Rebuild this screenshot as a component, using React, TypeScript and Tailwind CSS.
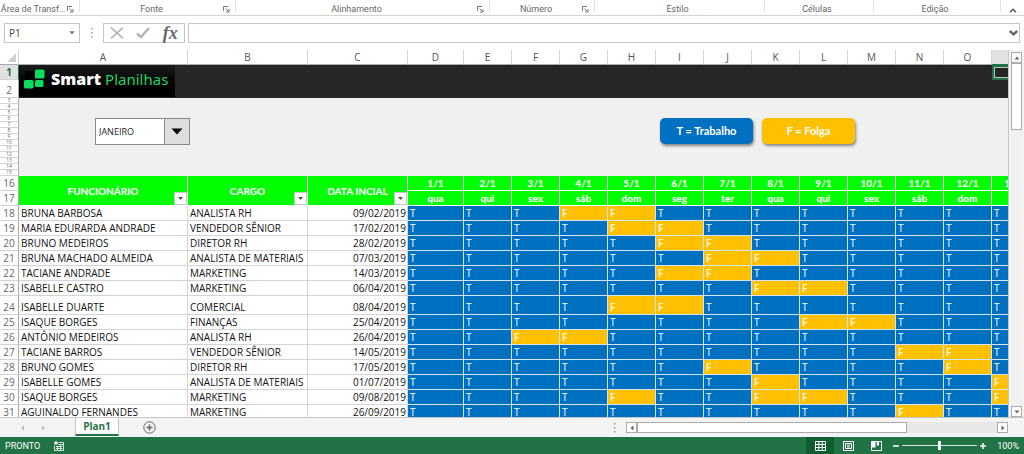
import { useState } from 'react';
import type { ReactNode } from 'react';
import clsx from 'clsx';

const ribbonGroups = [
  { label: 'Área de Transf...', launcher: true },
  { label: 'Fonte', launcher: true },
  { label: 'Alinhamento', launcher: true },
  { label: 'Número', launcher: true },
  { label: 'Estilo', launcher: false },
  { label: 'Células', launcher: false },
  { label: 'Edição', launcher: false },
];

const columns = ['A', 'B', 'C', 'D', 'E', 'F', 'G', 'H', 'I', 'J', 'K', 'L', 'M', 'N', 'O', 'P'];
const weekdays = ['qua', 'qui', 'sex', 'sáb', 'dom', 'seg', 'ter'];
const days = Array.from({ length: 13 }, (_, i) => ({ date: `${i + 1}/1`, weekday: weekdays[i % 7] }));
const spacerRows = Array.from({ length: 13 }, (_, i) => i + 3);

const months = [
  'JANEIRO', 'FEVEREIRO', 'MARÇO', 'ABRIL', 'MAIO', 'JUNHO',
  'JULHO', 'AGOSTO', 'SETEMBRO', 'OUTUBRO', 'NOVEMBRO', 'DEZEMBRO',
];

// off: indexes of the days off, counted from 1/1
const employees = [
  { row: 18, name: 'BRUNA BARBOSA', role: 'ANALISTA RH', start: '09/02/2019', off: [3, 4] },
  { row: 19, name: 'MARIA EDURARDA ANDRADE', role: 'VENDEDOR SÊNIOR', start: '17/02/2019', off: [4, 5] },
  { row: 20, name: 'BRUNO MEDEIROS', role: 'DIRETOR RH', start: '28/02/2019', off: [5, 6] },
  { row: 21, name: 'BRUNA MACHADO ALMEIDA', role: 'ANALISTA DE MATERIAIS', start: '07/03/2019', off: [6, 7] },
  { row: 22, name: 'TACIANE ANDRADE', role: 'MARKETING', start: '14/03/2019', off: [5, 6] },
  { row: 23, name: 'ISABELLE CASTRO', role: 'MARKETING', start: '06/04/2019', off: [7, 8] },
  { row: 24, name: 'ISABELLE DUARTE', role: 'COMERCIAL', start: '08/04/2019', off: [4, 5], tall: true },
  { row: 25, name: 'ISAQUE BORGES', role: 'FINANÇAS', start: '25/04/2019', off: [8, 9] },
  { row: 26, name: 'ANTÔNIO MEDEIROS', role: 'ANALISTA RH', start: '26/04/2019', off: [2, 3] },
  { row: 27, name: 'TACIANE BARROS', role: 'VENDEDOR SÊNIOR', start: '14/05/2019', off: [10, 11] },
  { row: 28, name: 'BRUNO GOMES', role: 'DIRETOR RH', start: '17/05/2019', off: [6, 11] },
  { row: 29, name: 'ISABELLE GOMES', role: 'ANALISTA DE MATERIAIS', start: '01/07/2019', off: [7, 12] },
  { row: 30, name: 'ISAQUE BORGES', role: 'MARKETING', start: '09/08/2019', off: [4, 7, 8, 12] },
  { row: 31, name: 'AGUINALDO FERNANDES', role: 'MARKETING', start: '26/09/2019', off: [10] },
];

const LauncherIcon = () => (
  <svg width="7" height="7" viewBox="0 0 7 7" fill="none" stroke="#777">
    <path d="M0.5 5V0.5H5M2.5 2.5L5.5 5.5M6 3V6H3" />
  </svg>
);

const Ribbon = () => (
  <div className="grid h-4 shrink-0 grid-cols-[80fr_156fr_254fr_105fr_170fr_109fr_127fr_23fr] border-b border-[#d4d4d4] font-[Roboto,sans-serif] text-[9px] leading-[18px] text-[#666]">
    {ribbonGroups.map((group) => (
      <div key={group.label} className="mb-1 flex h-3 border-r border-[#e1e1e1] pr-1">
        <span className="flex-1 whitespace-nowrap text-center">{group.label}</span>
        {group.launcher && (
          <button aria-label={`Opções de ${group.label}`} className="w-2 pt-1.5">
            <LauncherIcon />
          </button>
        )}
      </div>
    ))}
    <button aria-label="Recolher a faixa de opções" className="flex items-center justify-center pt-1">
      <svg width="8" height="5" viewBox="0 0 8 5" fill="none" stroke="#555" strokeWidth="1.5">
        <path d="M1 4.2L4 1.2L7 4.2" />
      </svg>
    </button>
  </div>
);

const DotGrip = () => (
  <svg width="2" height="10" viewBox="0 0 2 10" fill="#999">
    <path d="M0 0h1.5v1.5H0zM0 4h1.5v1.5H0zM0 8h1.5v1.5H0z" />
  </svg>
);

const FormulaBar = () => (
  <div className="flex h-[34px] shrink-0 items-center px-1">
    <div className="flex h-5 w-19 items-center border border-[#c6c6c6] bg-white">
      <input aria-label="Caixa de nome" defaultValue="P1" className="w-full min-w-0 pl-1 text-[10px] text-[#444] outline-none" />
      <button aria-label="Abrir lista de nomes" className="px-1">
        <svg width="6" height="4" viewBox="0 0 6 4" fill="#777"><path d="M0.3 0.3H5.7L3 3.5Z" /></svg>
      </button>
    </div>
    <div className="flex w-[23px] justify-center"><DotGrip /></div>
    <div className="flex h-5 w-[82px] items-center justify-around border border-[#c6c6c6] bg-white">
      <button aria-label="Cancelar">
        <svg width="14" height="12" viewBox="0 0 14 12" stroke="#b4b4b4" strokeWidth="1.7"><path d="M1 0.7L13 11.3M13 0.7L1 11.3" /></svg>
      </button>
      <button aria-label="Inserir">
        <svg width="14" height="12" viewBox="0 0 14 12" fill="none" stroke="#b4b4b4" strokeWidth="2.4"><path d="M1 6.5L5 10L13 1" /></svg>
      </button>
      <button aria-label="Inserir função" className="font-['Liberation_Serif',serif] text-lg leading-4 font-bold text-[#666] italic">
        fx
      </button>
    </div>
    <div className="ml-[3px] flex h-5 flex-1 items-center border border-[#c6c6c6] bg-white">
      <input aria-label="Barra de fórmulas" className="min-w-0 flex-1 px-1 text-[10px] outline-none" />
      <button aria-label="Expandir barra de fórmulas" className="px-px">
        <svg width="9" height="6" viewBox="0 0 9 6" fill="none" stroke="#666" strokeWidth="2.4"><path d="M0.8 1L4.5 4.4L8.2 1" /></svg>
      </button>
    </div>
  </div>
);

const Logo = () => (
  <div className="flex h-8 w-39 items-center bg-gradient-to-b from-[#1c1c1c] to-black pb-1 pl-[5px]">
    <svg width="21" height="20" viewBox="0 0 21 20">
      <rect x="1" y="2" width="9" height="8" rx="1" fill="#000" />
      <rect x="11" y="0.5" width="9.500" height="9" rx="1.500" fill="#0bdc62" />
      <rect x="0" y="11" width="9.500" height="8.500" rx="1.500" fill="#0bdc62" />
      <rect x="11" y="11" width="8.500" height="7" rx="1.500" fill="#0bdc62" />
    </svg>
    <span className="ml-1.5 font-['Open_Sans',sans-serif] text-base leading-5 font-extrabold text-white">Smart</span>
    <span className="ml-1 font-['Noto_Sans',sans-serif] text-[15px] leading-5 text-[#1fd366]">Planilhas</span>
  </div>
);

const MonthPicker = () => {
  const [month, setMonth] = useState('JANEIRO');

  return (
    <div className="relative h-[27px] w-[95px]">
      <select
        aria-label="Mês"
        value={month}
        onChange={(e) => setMonth(e.target.value)}
        className="h-full w-full appearance-none border border-[#8a8a8a] bg-white pl-[3px] font-['Open_Sans',sans-serif] text-[9px] text-[#222]"
      >
        {months.map((m) => (
          <option key={m}>{m}</option>
        ))}
      </select>
      <span className="pointer-events-none absolute inset-y-px right-px flex w-[25px] items-center justify-center border-l border-[#8a8a8a] bg-[#dedede]">
        <svg width="12" height="7" viewBox="0 0 12 7"><path d="M0.5 0.5H11.5L6 6.5Z" /></svg>
      </span>
    </div>
  );
};

const Legend = ({ className, children }: { className: string; children: ReactNode }) => (
  <div className={clsx('flex h-[26px] w-[93px] items-center justify-center rounded-[5px] text-[11px] font-bold text-white shadow-[1px_2px_3px_rgba(0,0,0,0.45)]', className)}>
    {children}
  </div>
);

const RowHeader = ({ children, active }: { children: ReactNode; active?: boolean }) => (
  <th
    scope="row"
    className={clsx(
      'border-r border-b p-0 text-center align-bottom text-[10px] leading-[14px]',
      active ? 'border-r-[#217346] border-b-[#d4d4d4] bg-[#e1e1e1] font-bold text-[#217346]' : 'border-r-[#ababab] border-b-[#d4d4d4] font-normal text-[#666]',
    )}
  >
    {children}
  </th>
);

const headCell = 'border-r border-b border-white bg-[#00ff00] p-0 font-[Lato,sans-serif] text-[10px] leading-[14px] font-black text-white';

const FilterHeader = ({ children }: { children: ReactNode }) => (
  <th rowSpan={2} scope="col" className={clsx(headCell, 'relative')}>
    {children}
    <button aria-label={`Filtrar ${children}`} className="absolute right-0 bottom-0 flex h-[13px] w-[13px] items-center justify-center border border-[#c6c6c6] bg-white">
      <svg width="5" height="3" viewBox="0 0 5 3" fill="#555"><path d="M0 0H5L2.500 3Z" /></svg>
    </button>
  </th>
);

const textCell = 'border-r border-b border-[#d4d4d4] py-0 pr-px pl-0.5 align-bottom whitespace-nowrap';

const Sheet = () => (
  <table className="w-[1040px] min-w-full table-fixed border-separate border-spacing-0 bg-white text-[10px] leading-[14px] text-[#111]">
    <colgroup>
      <col className="w-[19px]" />
      <col className="w-[169px]" />
      <col className="w-[120px]" />
      <col className="w-[100px]" />
      <col className="w-14" />
      {columns.slice(4).map((c) => (
        <col key={c} className="w-12" />
      ))}
    </colgroup>
    <thead>
      <tr className="h-[15px] text-[#555]">
        <td className="border-r border-b border-r-[#d4d4d4] border-b-[#ababab] p-0">
          <svg width="9" height="9" viewBox="0 0 9 9" fill="#d0d0d0" className="ml-auto mr-0.5"><path d="M9 0V9H0Z" /></svg>
        </td>
        {columns.map((c) => (
          <th
            key={c}
            scope="col"
            className={clsx('border-r border-b border-r-[#d4d4d4] p-0 font-normal', c === 'P' ? 'border-b-[#217346] bg-[#e1e1e1]' : 'border-b-[#ababab]')}
          >
            {c}
          </th>
        ))}
      </tr>
    </thead>
    <tbody>
      <tr className="h-[15px]">
        <RowHeader active>1</RowHeader>
        <td rowSpan={2} colSpan={15} className="bg-[#262626] p-0 align-top">
          <Logo />
        </td>
        <td className="border-2 border-[#217346] bg-[#262626] p-0 ring-1 ring-white/70 ring-inset" />
      </tr>
      <tr className="h-[18px]">
        <RowHeader>2</RowHeader>
        <td className="bg-[#262626] p-0" />
      </tr>
      {spacerRows.map((n, i) => (
        <tr key={n} className="h-1.5">
          <RowHeader>
            <div className="text-[5px] leading-[5px]">{n}</div>
          </RowHeader>
          {i === 0 && (
            <td rowSpan={13} colSpan={16} className="bg-[#f0f0f0] p-0 align-top">
              <div className="flex justify-between pt-5 pr-[185px] pl-19">
                <MonthPicker />
                <div className="flex gap-[9px] font-[Lato,sans-serif]">
                  <Legend className="bg-[#0070c0]">T = Trabalho</Legend>
                  <Legend className="bg-[#ffc000]">F = Folga</Legend>
                </div>
              </div>
            </td>
          )}
        </tr>
      ))}
      <tr className="h-[15px]">
        <RowHeader>16</RowHeader>
        <FilterHeader>FUNCIONÁRIO</FilterHeader>
        <FilterHeader>CARGO</FilterHeader>
        <FilterHeader>DATA INCIAL</FilterHeader>
        {days.map((d) => (
          <th key={d.date} scope="col" className={headCell}>{d.date}</th>
        ))}
      </tr>
      <tr className="h-[15px]">
        <RowHeader>17</RowHeader>
        {days.map((d) => (
          <th key={d.date} className={headCell}>{d.weekday}</th>
        ))}
      </tr>
      {employees.map((e) => (
        <tr key={e.row} className={e.tall ? 'h-[19px]' : 'h-[15px]'}>
          <RowHeader>{e.row}</RowHeader>
          <td className={textCell}>{e.name}</td>
          <td className={textCell}>{e.role}</td>
          <td className={clsx(textCell, 'text-right')}>{e.start}</td>
          {days.map((d, i) => (
            <td
              key={d.date}
              className={clsx('border-r border-b border-[#d3e4f2] py-0 pr-px pl-0.5 align-bottom text-white', e.off.includes(i) ? 'bg-[#ffc000] font-semibold' : 'bg-[#0070c0]')}
            >
              {e.off.includes(i) ? 'F' : 'T'}
            </td>
          ))}
        </tr>
      ))}
    </tbody>
  </table>
);

const arrows = {
  up: 'M0.5 4.5H5.5L3 1.5Z',
  down: 'M0.5 1.5H5.5L3 4.5Z',
  left: 'M4.5 0.5V5.5L1.5 3Z',
  right: 'M1.5 0.5V5.5L4.5 3Z',
};

const ScrollButton = ({ dir, label }: { dir: keyof typeof arrows; label: string }) => (
  <button aria-label={label} className="flex h-[11px] w-[11px] shrink-0 items-center justify-center border border-[#ababab] bg-white">
    <svg width="6" height="6" viewBox="0 0 6 6" fill="#666"><path d={arrows[dir]} /></svg>
  </button>
);

const VerticalScroll = () => (
  <div className="flex w-4 shrink-0 flex-col items-center border-l border-[#c6c6c6] bg-[#f3f3f3] pt-0.5">
    <ScrollButton dir="up" label="Rolar para cima" />
    <div className="w-[11px] flex-1 bg-[#f0f0f0]">
      <div className="h-[67px] border border-[#ababab] bg-white" />
    </div>
    <ScrollButton dir="down" label="Rolar para baixo" />
  </div>
);

const SheetTabs = () => (
  <div className="flex h-5 shrink-0 items-center border-t border-[#c6c6c6] bg-[#f3f3f3] pr-4">
    <div className="flex w-[75px] gap-4 pl-5">
      <button aria-label="Planilha anterior"><svg width="5" height="6" viewBox="0 0 5 6" fill="#bbb"><path d="M4 0.5V5.500L1 3Z" /></svg></button>
      <button aria-label="Próxima planilha"><svg width="5" height="6" viewBox="0 0 5 6" fill="#bbb"><path d="M1 0.5V5.500L4 3Z" /></svg></button>
    </div>
    <button className="mb-0.5 h-[18px] w-11 border-x border-b-2 border-x-[#c6c6c6] border-b-[#217346] bg-white text-[10px] leading-4 font-bold text-[#217346]">
      Plan1
    </button>
    <button aria-label="Nova planilha" className="ml-6">
      <svg width="13" height="13" viewBox="0 0 13 13" fill="none" stroke="#666">
        <circle cx="6.500" cy="6.500" r="5.700" />
        <path d="M6.500 3.500V9.500M3.500 6.500H9.500" strokeWidth="1.500" />
      </svg>
    </button>
    <div className="ml-auto flex w-[394px] items-center">
      <DotGrip />
      <div className="ml-2.5 flex flex-1 bg-[#e8e8e8]">
        <ScrollButton dir="left" label="Rolar para a esquerda" />
        <div className="flex-1">
          <div className="h-[11px] w-3/4 border border-[#ababab] bg-white" />
        </div>
        <ScrollButton dir="right" label="Rolar para a direita" />
      </div>
    </div>
  </div>
);

const StatusBar = () => {
  const [zoom, setZoom] = useState(100);

  return (
    <div className="flex h-[17px] shrink-0 items-center bg-[#217346] px-[5px] font-[Roboto,sans-serif] text-[9px] leading-4 text-white">
      <span>PRONTO</span>
      <button aria-label="Gravar macro" className="ml-3.5">
        <svg width="10" height="10" viewBox="0 0 10 10" fill="none" stroke="#fff">
          <circle cx="2" cy="2" r="1.800" fill="#fff" stroke="none" />
          <path d="M4.500 1.500H9.500V9.500H0.500V4.500M4 3.500H9.500M2 5.500H8.500M2 7.500H8.500" strokeWidth="0.800" />
          <path d="M3.500 5V9M6.500 3.500V9" strokeWidth="0.800" />
        </svg>
      </button>
      <div className="ml-auto flex h-full">
        <button aria-label="Normal" className="flex w-7 items-center justify-center bg-[#0e5c2f]">
          <svg width="11" height="10" viewBox="0 0 11 10" fill="none" stroke="#fff">
            <path d="M0.500 0.500H10.500V9.500H0.500ZM0.500 3.500H10.500M0.500 6.500H10.500M3.800 0.500V9.500M7.200 0.500V9.500" />
          </svg>
        </button>
        <button aria-label="Layout da página" className="flex w-7 items-center justify-center">
          <svg width="11" height="10" viewBox="0 0 11 10" fill="none" stroke="#fff">
            <path d="M0.500 0.500H10.500V9.500H0.500ZM2.500 2.500H8.500V7.500H2.500ZM4 4.200H7M4 6H7" />
          </svg>
        </button>
        <button aria-label="Visualização da quebra de página" className="flex w-7 items-center justify-center">
          <svg width="11" height="10" viewBox="0 0 11 10" fill="none" stroke="#fff">
            <path d="M0.500 0.500H10.500V9.500H0.500Z" />
            <path d="M1 1H4.500V6.500H1ZM5.800 1H8V4.500H5.800Z" fill="#fff" stroke="none" />
          </svg>
        </button>
      </div>
      <button aria-label="Reduzir" className="flex w-3 justify-center">
        <svg width="6" height="6" viewBox="0 0 6 6" stroke="#fff" strokeWidth="1.500"><path d="M0 3H6" /></svg>
      </button>
      <input
        type="range"
        aria-label="Zoom"
        min={0}
        max={200}
        value={zoom}
        onChange={(e) => setZoom(Number(e.target.value))}
        className="h-px w-[75px] appearance-none bg-white/80 [&::-webkit-slider-thumb]:h-[9px] [&::-webkit-slider-thumb]:w-[3px] [&::-webkit-slider-thumb]:appearance-none [&::-webkit-slider-thumb]:bg-white"
      />
      <button aria-label="Ampliar" className="flex w-3 justify-center">
        <svg width="6" height="6" viewBox="0 0 6 6" stroke="#fff" strokeWidth="1.500"><path d="M0 3H6M3 0V6" /></svg>
      </button>
      <span className="w-[30px] text-right">{zoom}%</span>
    </div>
  );
};

export default function App() {
  return (
    <div className="flex h-screen flex-col overflow-hidden bg-white font-['Open_Sans',sans-serif]">
      <Ribbon />
      <FormulaBar />
      <div className="flex min-h-0 flex-1">
        <div className="min-w-0 flex-1 overflow-hidden">
          <Sheet />
        </div>
        <VerticalScroll />
      </div>
      <SheetTabs />
      <StatusBar />
    </div>
  );
}
